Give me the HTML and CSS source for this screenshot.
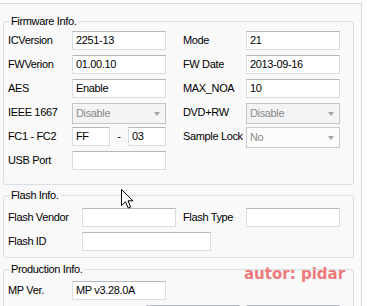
FILE: index.html
```html
<!DOCTYPE html>
<html>
<head>
<meta charset="utf-8">
<link rel="stylesheet" href="styles.css">
</head>
<body>
<div class="panel">
  <fieldset class="group g-fw">
    <legend>Firmware Info.</legend>
    <div class="row">
      <span class="lbl">ICVersion</span><div class="tb">2251-13</div>
      <span class="lbl lbl2">Mode</span><div class="tb">21</div>
    </div>
    <div class="row">
      <span class="lbl">FWVerion</span><div class="tb">01.00.10</div>
      <span class="lbl lbl2">FW Date</span><div class="tb">2013-09-16</div>
    </div>
    <div class="row">
      <span class="lbl">AES</span><div class="tb">Enable</div>
      <span class="lbl lbl2">MAX_NOA</span><div class="tb">10</div>
    </div>
    <div class="row">
      <span class="lbl">IEEE 1667</span><div class="cb disabled"><span>Disable</span><i class="arrow"></i></div>
      <span class="lbl lbl2">DVD+RW</span><div class="cb disabled"><span>Disable</span><i class="arrow"></i></div>
    </div>
    <div class="row">
      <span class="lbl">FC1 - FC2</span><div class="tb tb-s">FF</div><span class="dash">-</span><div class="tb tb-s">03</div>
      <span class="lbl lbl2">Sample Lock</span><div class="cb"><span>No</span><i class="arrow"></i></div>
    </div>
    <div class="row">
      <span class="lbl">USB Port</span><div class="tb"></div>
    </div>
  </fieldset>

  <fieldset class="group g-fl">
    <legend>Flash Info.</legend>
    <div class="row">
      <span class="lbl lbl-w">Flash Vendor</span><div class="tb"></div>
      <span class="lbl lbl3">Flash Type</span><div class="tb"></div>
    </div>
    <div class="row">
      <span class="lbl lbl-w">Flash ID</span><div class="tb tb-l"></div>
    </div>
  </fieldset>

  <fieldset class="group g-pr">
    <legend>Production Info.</legend>
    <div class="row">
      <span class="lbl">MP Ver.</span><div class="tb">MP v3.28.0A</div>
    </div>
    <div class="row">
      <span class="lbl lbl-x"></span><div class="tb"></div><div class="tb tb-gap"></div>
    </div>
  </fieldset>
</div>
<div class="watermark">autor: pidar</div>
<svg class="cursor" width="13" height="21" viewBox="0 0 13 21">
  <path d="M0.5 0.5 L0.5 16.5 L4.5 12.7 L7.2 19 L9.6 18 L7 11.8 L12 11.8 Z" fill="#fff" stroke="#000" stroke-width="1" stroke-linejoin="miter"/>
</svg>
</body>
</html>
```

FILE: styles.css
```css
html, body {
  margin: 0;
  padding: 0;
}
body {
  background: #fdfdfd;
  font-family: "Liberation Sans", Arial, sans-serif;
  font-size: 11px;
  letter-spacing: -0.35px;
  color: #000;
  width: 367px;
  height: 306px;
  overflow: hidden;
  position: relative;
}
.panel {
  margin-top: 3px;
  width: 361px;
  height: 302px;
  border-top: 1px solid #dadada;
  border-right: 1px solid #dadada;
  background: #f9f9f9;
  overflow: hidden;
}
.group {
  box-sizing: border-box;
  width: 351px;
  margin: 0 0 0 3px;
  padding: 0 0 0 4px;
  border: 1px solid #d5dfe5;
  border-radius: 3px;
  min-width: 0;
}
.group legend {
  padding: 0 2px;
  margin-left: 1px;
  line-height: 13px;
  height: 13px;
  color: #000;
}
.g-fw {
  margin-top: 11px;
  padding-top: 3px;
  padding-bottom: 9px;
}
.g-fl {
  margin-top: 4px;
  padding-top: 6px;
  padding-bottom: 1px;
}
.g-pr {
  margin-top: 5px;
  padding-top: 5px;
}
.row {
  display: flex;
  align-items: flex-start;
  height: 24px;
}
.lbl {
  width: 64px;
  line-height: 19px;
  white-space: nowrap;
  flex: none;
}
.lbl2 {
  margin-left: 17px;
  width: 63px;
}
.lbl-w {
  width: 74px;
}
.lbl3 {
  margin-left: 7px;
  width: 63px;
}
.lbl-x {
  width: 138px;
}
.tb {
  box-sizing: border-box;
  flex: none;
  width: 94px;
  height: 19px;
  line-height: 17px;
  padding: 0 3px;
  background: #fff;
  border: 1px solid #d9dce1;
  border-top-color: #b4b7bc;
  white-space: nowrap;
}
.tb-s {
  width: 38px;
}
.tb-l {
  width: 129px;
}
.tb-gap {
  margin-left: 6px;
}
.dash {
  flex: none;
  width: 18px;
  text-align: center;
  line-height: 19px;
}
.cb {
  box-sizing: border-box;
  flex: none;
  width: 94px;
  height: 21px;
  line-height: 19px;
  padding: 0 3px;
  background: #fcfcfc;
  border: 1px solid #c9cbce;
  color: #8a8a8a;
  display: flex;
  align-items: center;
  justify-content: space-between;
}
.cb.disabled {
  background: #f4f4f4;
  border-color: #c3c5c8;
}
.cb span {
  line-height: 19px;
}
.arrow {
  display: block;
  width: 0;
  height: 0;
  margin-right: 2px;
  border-left: 3.5px solid transparent;
  border-right: 3.5px solid transparent;
  border-top: 4px solid #a6a6a6;
}
.watermark {
  position: absolute;
  left: 244px;
  top: 265px;
  font-family: "DejaVu Sans", sans-serif;
  font-weight: bold;
  font-size: 15px;
  letter-spacing: 0;
  color: #ee7b7b;
  white-space: nowrap;
}
.cursor {
  position: absolute;
  left: 121px;
  top: 189px;
}
```
